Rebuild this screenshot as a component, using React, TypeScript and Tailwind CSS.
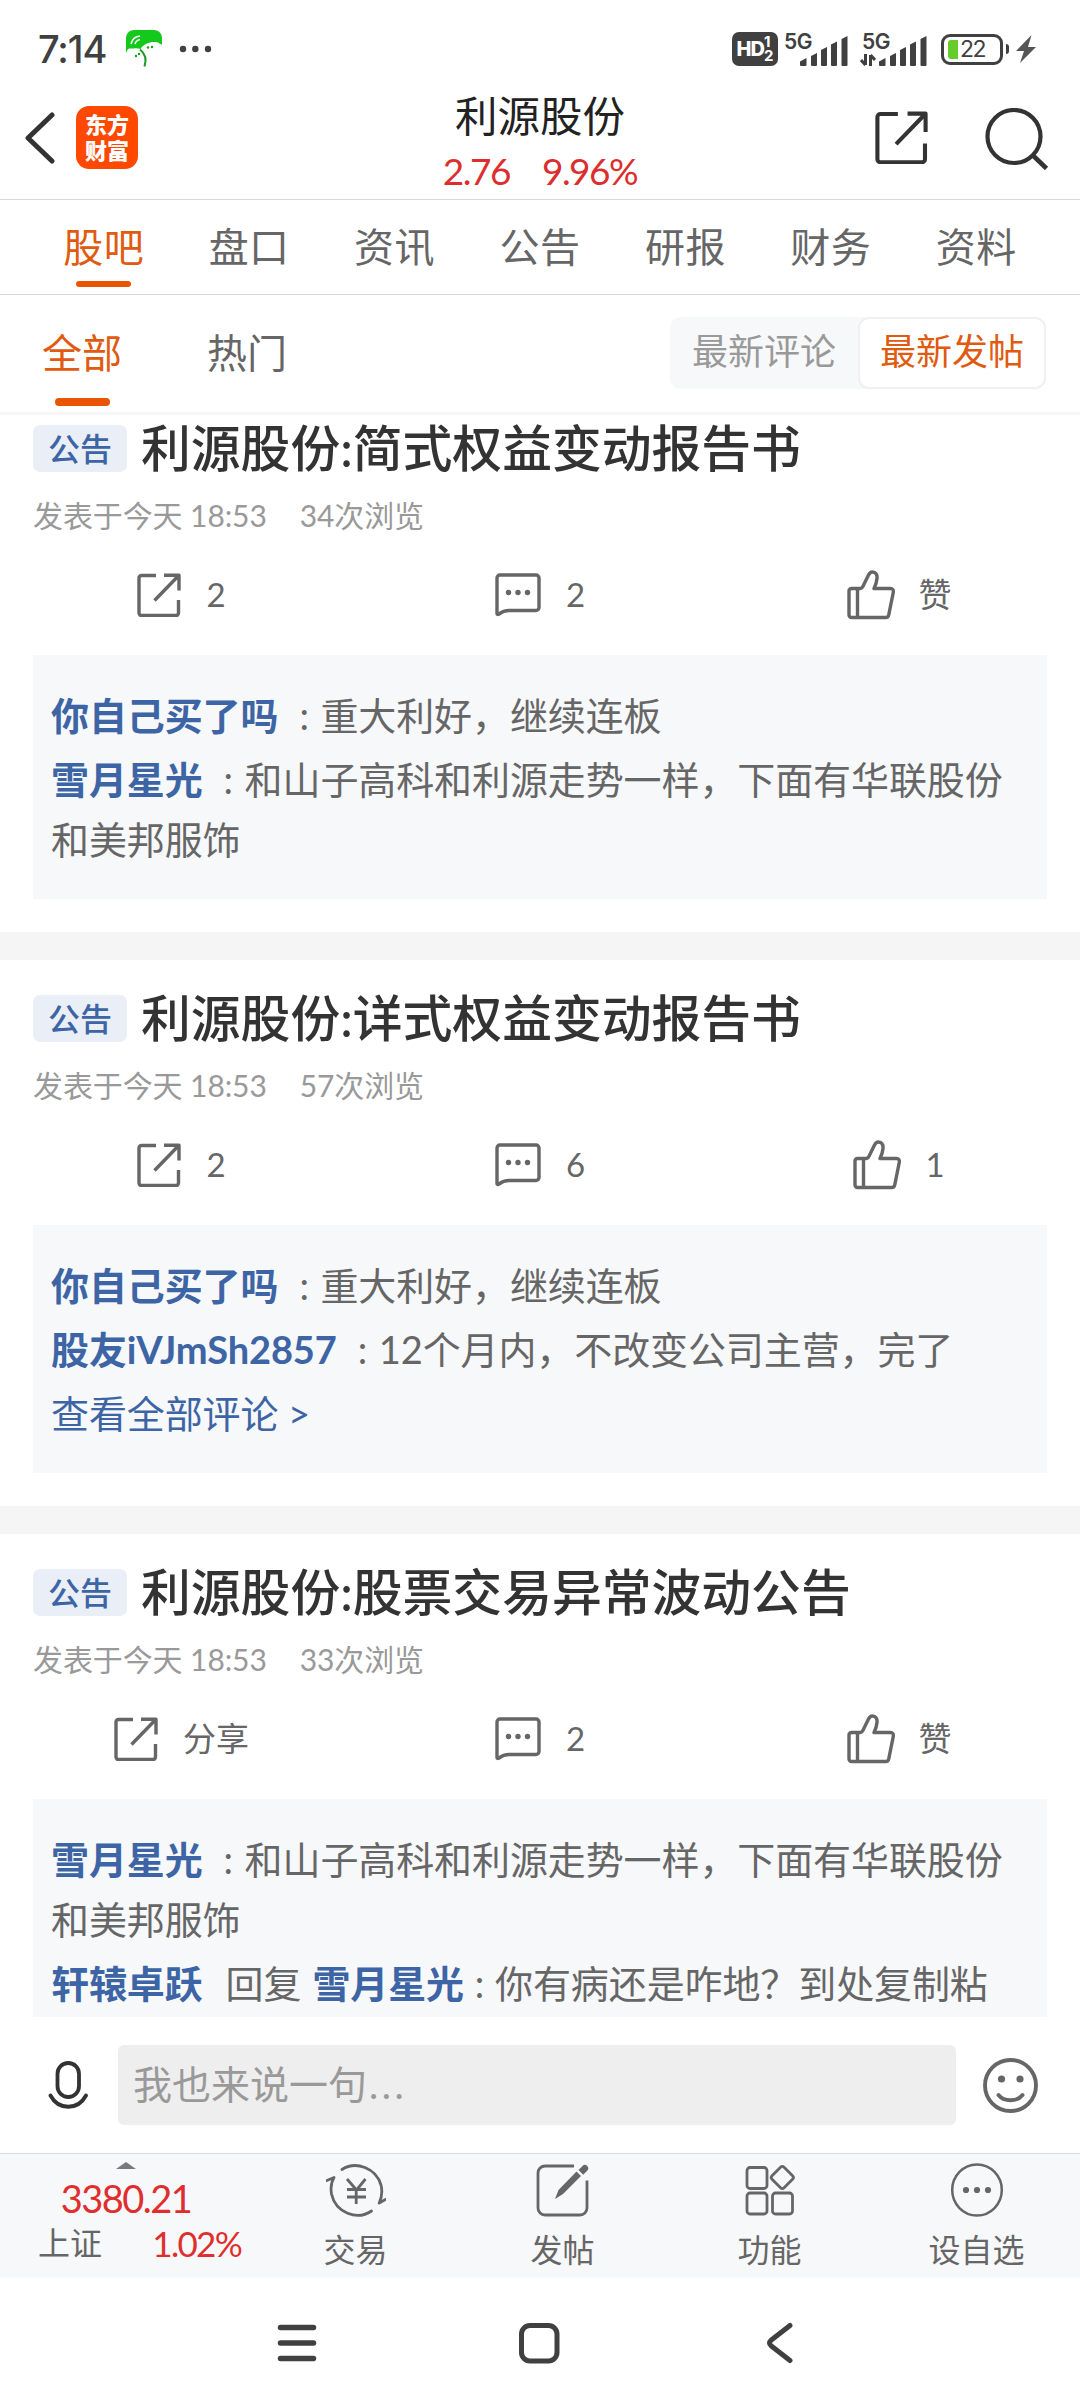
import React from 'react';

interface Comment {
  user: string;
  replyTo?: string;
  text: string;
}

interface Post {
  id: number;
  title: string;
  time: string;
  views: number;
  shares: number;
  replies: number;
  likes: number;
  comments: Comment[];
  hasMore?: boolean;
}

const tabs = ['股吧', '盘口', '资讯', '公告', '研报', '财务', '资料'];

const posts: Post[] = [
  {
    id: 1,
    title: '利源股份:简式权益变动报告书',
    time: '今天 18:53',
    views: 34,
    shares: 2,
    replies: 2,
    likes: 0,
    comments: [
      { user: '你自己买了吗', text: '重大利好，继续连板' },
      { user: '雪月星光', text: '和山子高科和利源走势一样，下面有华联股份和美邦服饰' },
    ],
  },
  {
    id: 2,
    title: '利源股份:详式权益变动报告书',
    time: '今天 18:53',
    views: 57,
    shares: 2,
    replies: 6,
    likes: 1,
    comments: [
      { user: '你自己买了吗', text: '重大利好，继续连板' },
      { user: '股友iVJmSh2857', text: '12个月内，不改变公司主营，完了' },
    ],
    hasMore: true,
  },
  {
    id: 3,
    title: '利源股份:股票交易异常波动公告',
    time: '今天 18:53',
    views: 33,
    shares: 0,
    replies: 2,
    likes: 0,
    comments: [
      { user: '雪月星光', text: '和山子高科和利源走势一样，下面有华联股份和美邦服饰' },
      { user: '轩辕卓跃', replyTo: '雪月星光', text: '你有病还是咋地？到处复制粘' },
    ],
  },
];

const SignalBars = () => (
  <svg className="h-[30px] w-[48px]" viewBox="0 0 48 30" fill="#404040">
    <path d="M0 25.500 6.500 22v7a1 1 0 0 1-1 1H1a1 1 0 0 1-1-1z" />
    <path d="M11 20l6-3v12a1 1 0 0 1-1 1H12a1 1 0 0 1-1-1z" />
    <path d="M21 14l6-3v18a1 1 0 0 1-1 1H22a1 1 0 0 1-1-1z" />
    <path d="M31 8.500l6-3V29a1 1 0 0 1-1 1H32a1 1 0 0 1-1-1z" />
    <path d="M41.500 3l6-3v29a1 1 0 0 1-1 1h-4a1 1 0 0 1-1-1z" />
  </svg>
);

const ShareIcon = ({ className }: { className: string }) => (
  <svg className={className} viewBox="0 0 44 44" fill="none" stroke="currentColor" strokeWidth="3.400" strokeLinecap="butt" strokeLinejoin="round">
    <path d="M19 2.500H4.500a2.500 2.500 0 0 0-2.500 2.500V40a2.500 2.500 0 0 0 2.500 2.500H39a2.500 2.500 0 0 0 2.500-2.500V27" />
    <path d="M27 2.200H42V17.500M41.500 2.700 17.500 27.500" />
  </svg>
);

const CommentIcon = () => (
  <svg className="h-[44px] w-[46px] text-[#666]" viewBox="0 0 46 44" fill="none" stroke="currentColor" strokeWidth="3.400" strokeLinejoin="round">
    <path d="M5 2h36a3 3 0 0 1 3 3v29.500a3 3 0 0 1-3 3H14c-4.500 0-7 1.200-10.500 3.800-.8.500-1.500 0-1.500-.9V5a3 3 0 0 1 3-3z" />
    <g fill="currentColor" stroke="none">
      <circle cx="13.500" cy="19.500" r="2.700" />
      <circle cx="23" cy="19.500" r="2.700" />
      <circle cx="32.500" cy="19.500" r="2.700" />
    </g>
  </svg>
);

const LikeIcon = () => (
  <svg className="h-[50px] w-[48px] text-[#666]" viewBox="0 0 48 50" fill="none" stroke="currentColor" strokeWidth="3.400" strokeLinejoin="round">
    <path d="M4.500 18.500H13c1.500 0 2.300-.8 3-2.200L21.500 5C22.500 3 24 2 25.500 2c3 0 5 2.700 4.500 6.500-.3 3.300-1.300 6.500-3 10h16.500c2 0 3.200 1.500 2.800 3.700l-4.500 22.500c-.3 1.700-1.400 2.800-3 2.800H4.500A2.500 2.500 0 0 1 2 45V21a2.500 2.500 0 0 1 2.500-2.500z" />
    <path d="M10.500 18.500v29" />
  </svg>
);

const StatusBar = () => (
  <div className="flex h-[76px] items-center pt-[22px] pr-[44px] pl-[38px] text-[#404040]">
    <span className="w-[88px] font-['Inter',sans-serif] text-[38px] leading-[54px] font-medium tracking-[-1.100px]">7:14</span>
    <svg className="h-[38px] w-[36px]" viewBox="0 0 36 38">
      <path d="M0 19V8a8 8 0 0 1 8-8h20a8 8 0 0 1 8 8v7c-1-1.500-3-1-4-2.500-6-1.500-14 .5-17.500 6.500C10 17.500 6 19 3 18.500 1.500 19 1 21 0 23z" fill="#14c81c" />
      <path d="M14 19.500c4.500 3.500 7 9.500 4.500 17" fill="none" stroke="#189a22" strokeWidth="2" />
      <path d="M5 14C6 9.500 9 6.500 14 6M9 14c.7-2.500 2.500-4 5-4.500" fill="none" stroke="#fff" strokeWidth="1.500" />
      <g fill="#14a01c">
        <circle cx="22" cy="17.500" r="1.200" />
        <circle cx="26" cy="17" r="1.200" />
        <circle cx="10" cy="26" r="1.200" />
        <circle cx="13" cy="24" r="1.200" />
      </g>
    </svg>
    <svg className="ml-[17px] h-[8px] w-[34px]" viewBox="0 0 34 8" fill="currentColor">
      <circle cx="4" cy="4" r="3.200" />
      <circle cx="16.300" cy="4" r="3.200" />
      <circle cx="29" cy="4" r="3.200" />
    </svg>

    <div className="ml-auto flex items-center">
      <div className="flex h-[34px] w-[46px] items-center justify-center rounded-[7px] bg-[#404040] text-white">
        <span className="font-['Inter',sans-serif] text-[20px] leading-none font-extrabold tracking-[-1px]">HD</span>
        <span className="flex flex-col font-['Inter',sans-serif] text-[15px] leading-[14px] font-bold">
          <span>1</span>
          <span>2</span>
        </span>
      </div>
      <div className="ml-[6px] flex h-[34px] w-[65px] items-end">
        <span className="h-full w-[16px] font-['Inter',sans-serif] text-[21px] leading-[20px] font-semibold tracking-[-0.5px] whitespace-nowrap">5G</span>
        <SignalBars />
      </div>
      <div className="ml-[13px] flex h-[34px] w-[66px] items-end">
        <div className="flex h-full w-[17px] flex-col justify-between">
          <span className="font-['Inter',sans-serif] text-[21px] leading-[20px] font-semibold tracking-[-0.5px] whitespace-nowrap">5G</span>
          <svg className="-ml-[2px] h-[12px] w-[16px]" viewBox="0 0 16 12" fill="none" stroke="#404040" strokeWidth="3">
            <path d="M5.500 0v11M1 6l4.500 5M10.500 12V1M15 6l-4.500-5" />
          </svg>
        </div>
        <SignalBars />
      </div>
      <div className="ml-[13px] flex h-[31px] w-[62px] items-center rounded-[9px] border-[3px] border-[#404040] pl-[4px]">
        <span className="h-[19px] w-[10px] rounded-l-[3px] bg-[#66cc2c]" />
        <span className="ml-[2px] font-['Inter',sans-serif] text-[23px] leading-none tracking-[-1.500px]">22</span>
      </div>
      <span className="ml-[3px] h-[10px] w-[3px] rounded-r-[3px] bg-[#404040]" />
      <svg className="ml-[7px] h-[28px] w-[20px]" viewBox="0 0 20 28" fill="#555">
        <path d="M15.500 0 0 16h8L4 28l16-16h-8z" />
      </svg>
    </div>
  </div>
);

const Header = () => (
  <header className="flex h-[124px] border-b border-[#d9d9d9] pr-[31px] pl-[25px]">
    <div className="flex w-[333px] items-start pt-[30px]">
      <svg className="mt-[6px] h-[52px] w-[30px]" viewBox="0 0 30 52" fill="none" stroke="#333" strokeWidth="5" strokeLinecap="round" strokeLinejoin="round">
        <path d="M27 3 3 26l24 23" />
      </svg>
      <div className="ml-[21px] flex h-[63px] w-[62px] flex-col items-center justify-center rounded-[13px] bg-[#ff4800] text-[22px] leading-[26px] font-black text-white">
        <span>东方</span>
        <span>财富</span>
      </div>
    </div>
    <div className="flex flex-1 flex-col items-center pt-[14px]">
      <h1 className="text-[42.500px] leading-[51px] text-[#222]">利源股份</h1>
      <div className="flex gap-[32px] text-[37px] leading-[59px] tracking-[-1.500px] text-[#dc2e2e]">
        <span>2.76</span>
        <span>9.96%</span>
      </div>
    </div>
    <div className="flex w-[327px] items-start justify-end pt-[32px] text-[#333]">
      <ShareIcon className="mt-[3px] h-[53px] w-[53px]" />
      <svg className="ml-[57px] h-[62px] w-[64px]" viewBox="0 0 64 62" fill="none" stroke="currentColor" strokeWidth="4.200">
        <circle cx="29" cy="28.500" r="26.500" />
        <path d="M47 46.500 61.500 60.500" strokeWidth="4.600" />
      </svg>
    </div>
  </header>
);

const TabBar = () => (
  <nav className="flex h-[95px] border-b border-[#d9d9d9] px-[31px]">
    {tabs.map((tab, i) => (
      <div key={tab} className={`flex flex-1 flex-col items-center pt-[17px] ${i === 0 ? 'text-[#e05a10]' : 'text-[#666]'}`}>
        <span className="text-[40px] leading-[60px] tracking-[0.5px]">{tab}</span>
        {i === 0 && <span className="mt-[4px] h-[6px] w-[55px] rounded-full bg-[#ea5504]" />}
      </div>
    ))}
  </nav>
);

const FilterBar = () => (
  <div className="flex h-[120px] border-b-[3px] border-[#f6f6f6] pr-[34px] pl-[42px]">
    <div className="flex w-[80px] flex-col items-center pt-[28px] text-[#e05a10]">
      <span className="text-[40px] leading-[60px]">全部</span>
      <span className="mt-[15px] h-[8px] w-[55px] rounded-full bg-[#ea5504]" />
    </div>
    <span className="ml-[85px] pt-[28px] text-[40px] leading-[60px] text-[#666]">热门</span>
    <div className="mt-[22px] ml-auto flex h-[72px] w-[376px] rounded-[11px] bg-[#f7f8fa] text-[36px] leading-[68px]">
      <span className="w-[188px] text-center text-[#999]">最新评论</span>
      <span className="w-[188px] rounded-[11px] border-2 border-[#f0f0f2] bg-white text-center leading-[64px] text-[#e05a10]">最新发帖</span>
    </div>
  </div>
);

const CommentLine: React.FC<{ comment: Comment }> = ({ comment }) => (
  <p className="leading-[60px]">
    <span className="font-bold text-[#3d65a5]">{comment.user}</span>
    {comment.replyTo ? (
      <>
        <span className="mr-[11px] ml-[23px]">回复</span>
        <span className="font-bold text-[#3d65a5]">{comment.replyTo}</span>
        <span className="inline-block w-[31px] text-center">:</span>
      </>
    ) : (
      <span className="inline-block w-[42px] pl-[21px]">:</span>
    )}
    {comment.text}
  </p>
);

const PostCard: React.FC<{ post: Post }> = ({ post }) => (
  <article className="border-b-[28px] border-[#f5f5f5] pb-[33px]">
    <div className="flex h-[103px] items-end px-[33px] pb-[21px]">
      <span className="flex h-[47px] w-[94px] items-center justify-center rounded-[7px] bg-[#eaeff7] text-[32px] font-medium text-[#3d65a5]">公告</span>
      <h2 className="ml-[14px] text-[49.800px] leading-[47px] font-medium text-[#333]">{post.title}</h2>
    </div>
    <div className="flex gap-[33px] px-[33px] text-[30px] leading-[44px] tracking-[-0.100px] text-[#999]">
      <span>{`发表于${post.time}`}</span>
      <span>{`${post.views}次浏览`}</span>
    </div>
    <div className="mt-[33px] grid h-[50px] grid-cols-3 text-[33px] text-[#666]">
      <div className="flex items-center justify-center gap-[25px] pl-[3px]">
        <ShareIcon className="h-[44px] w-[44px]" />
        <span>{post.shares || '分享'}</span>
      </div>
      <div className="flex items-center justify-center gap-[25px]">
        <CommentIcon />
        <span>{post.replies}</span>
      </div>
      <div className="flex items-center justify-center gap-[24px] pr-[2px]">
        <LikeIcon />
        <span>{post.likes || '赞'}</span>
      </div>
    </div>
    <div className="mx-[33px] mt-[35px] flex flex-col gap-[4px] bg-[#f7f8fa] px-[18px] py-[30px] text-[38px] tracking-[-0.100px] text-[#666]">
      {post.comments.map((comment) => (
        <CommentLine key={comment.user} comment={comment} />
      ))}
      {post.hasMore && <p className="leading-[60px] text-[#3d65a5]">查看全部评论 &gt;</p>}
    </div>
  </article>
);

const ReplyBar = () => (
  <div className="flex h-[136px] items-center pr-[40px] pl-[48px]">
    <svg className="h-[48px] w-[40px]" viewBox="0 0 40 48" fill="none" stroke="#333" strokeWidth="3.800" strokeLinecap="round">
      <rect x="9.500" y="2" width="21.500" height="34" rx="10.700" />
      <path d="M2.500 34.500c8 15 27.500 15 35.500 0" />
    </svg>
    <div className="ml-[30px] h-[80px] w-[838px] rounded-[6px] bg-[#eee] pl-[15px] text-[39px] leading-[78px] text-[#999]">
      我也来说一句<span className="ml-[2px] tracking-[3.500px]">...</span>
    </div>
    <svg className="ml-[27px] h-[55px] w-[55px]" viewBox="0 0 55 55" fill="none" stroke="#666" strokeWidth="3.900" strokeLinecap="round">
      <circle cx="27.500" cy="27.500" r="25.500" />
      <path d="M15.500 37c5.500 7 18.500 7 24 0" />
      <circle cx="18.500" cy="21" r="3.600" fill="#666" stroke="none" />
      <circle cx="37" cy="21" r="3.600" fill="#666" stroke="none" />
    </svg>
  </div>
);

const TradeIcon = () => (
  <svg className="h-[54px] w-[60px]" viewBox="0 0 60 54" fill="none" stroke="#666" strokeWidth="2.800" strokeLinecap="round" strokeLinejoin="round">
    <path d="M16 6.500C30-2.500 50 5 55 22c1.500 6 1 12-1.800 18L59.500 36.500" />
    <path d="M45.500 48C31 58 9.500 49.500 5.500 31c-1-6-.5-11.500 2.500-16.500L.9 17.500" />
    <path d="M21 16l9.500 11L39.500 16M30.200 27v14M21 26.500h19M21 34h19" strokeLinecap="butt" />
  </svg>
);

const WriteIcon = () => (
  <svg className="h-[54px] w-[54px]" viewBox="0 0 54 54" fill="none" stroke="#666" strokeWidth="2.800" strokeLinejoin="round">
    <path d="M38 3H9a7 7 0 0 0-7 7v35a7 7 0 0 0 7 7h35a7 7 0 0 0 7-7V17.500" />
    <path d="M19 36l3.500-9L40.500 8.500l4.500 4.500-18 18z" fill="#666" stroke="none" />
    <path d="M42.500 7l4-4a3.300 3.300 0 0 1 4.700 4.700l-4 4z" fill="#666" stroke="none" />
  </svg>
);

const FunctionIcon = () => (
  <svg className="h-[54px] w-[50px]" viewBox="0 0 50 54" fill="none" stroke="#666" strokeWidth="2.800">
    <rect x="2" y="4.500" width="20" height="21" rx="3" />
    <rect x="2" y="30" width="20" height="21" rx="3" />
    <rect x="27.500" y="30" width="20" height="21" rx="3" />
    <rect x="28.800" y="6" width="17" height="17" rx="2.500" transform="rotate(45 37.300 14.500)" />
  </svg>
);

const MoreIcon = () => (
  <svg className="h-[54px] w-[54px]" viewBox="0 0 54 54" fill="none" stroke="#666" strokeWidth="2.500">
    <ellipse cx="27" cy="27" rx="24.800" ry="25.500" />
    <g fill="#666" stroke="none">
      <circle cx="16" cy="27" r="3.100" />
      <circle cx="27" cy="27" r="3.100" />
      <circle cx="38" cy="27" r="3.100" />
    </g>
  </svg>
);

const actions = [
  { label: '交易', Icon: TradeIcon },
  { label: '发帖', Icon: WriteIcon },
  { label: '功能', Icon: FunctionIcon },
  { label: '设自选', Icon: MoreIcon },
];

const BottomBar = () => (
  <div className="flex h-[125px] border-t border-[#d9d9d9] bg-[#f7f8fa]">
    <div className="flex w-[252px] flex-col items-center pt-[8px] text-[#e02e2e]">
      <svg className="h-[7px] w-[20px]" viewBox="0 0 20 7" fill="#777a80">
        <path d="M0 7 10 0l10 7z" />
      </svg>
      <span className="mt-[6px] text-[38px] leading-[46px] tracking-[-1.500px]">3380.21</span>
      <div className="flex w-full items-center justify-between pr-[11px] pl-[38px] leading-[44px]">
        <span className="text-[32px] text-[#666]">上证</span>
        <span className="text-[35px] tracking-[-1.700px]">1.02%</span>
      </div>
    </div>
    {actions.map(({ label, Icon }) => (
      <div key={label} className="flex w-[207px] flex-col items-center pt-[9px]">
        <Icon />
        <span className="mt-[10px] text-[32px] leading-[46px] text-[#666]">{label}</span>
      </div>
    ))}
  </div>
);

const SystemNav = () => (
  <div className="flex h-[130px] items-center pl-[277px]">
    <svg className="h-[40px] w-[40px]" viewBox="0 0 40 40" stroke="#404040" strokeWidth="5.500" strokeLinecap="round">
      <path d="M3.500 4.500h33M3.500 20h33M3.500 35.500h33" />
    </svg>
    <svg className="ml-[201px] h-[42px] w-[42px]" viewBox="0 0 42 42" fill="none" stroke="#404040" strokeWidth="5">
      <rect x="3.500" y="3.500" width="35.500" height="35.500" rx="8.500" />
    </svg>
    <svg className="ml-[205px] h-[42px] w-[30px]" viewBox="0 0 30 42" fill="none" stroke="#404040" strokeWidth="5" strokeLinecap="round" strokeLinejoin="round">
      <path d="M25 3.500 6 18.300q-3 2.700 0 5.400L25 38.500" />
    </svg>
  </div>
);

export default function App() {
  return (
    <div lang="zh-CN" className="flex h-[2408px] w-[1080px] flex-col overflow-hidden bg-white font-['Lato','Noto_Sans_CJK_SC',sans-serif]">
      <StatusBar />
      <Header />
      <TabBar />
      <FilterBar />
      {/* the feed is scrolled slightly, so the first card is cut by the filter bar */}
      <main className="h-[1602px] shrink-0 overflow-hidden">
        <div className="-mt-[25px]">
          {posts.map((post) => (
            <PostCard key={post.id} post={post} />
          ))}
        </div>
      </main>
      <ReplyBar />
      <BottomBar />
      <SystemNav />
    </div>
  );
}
